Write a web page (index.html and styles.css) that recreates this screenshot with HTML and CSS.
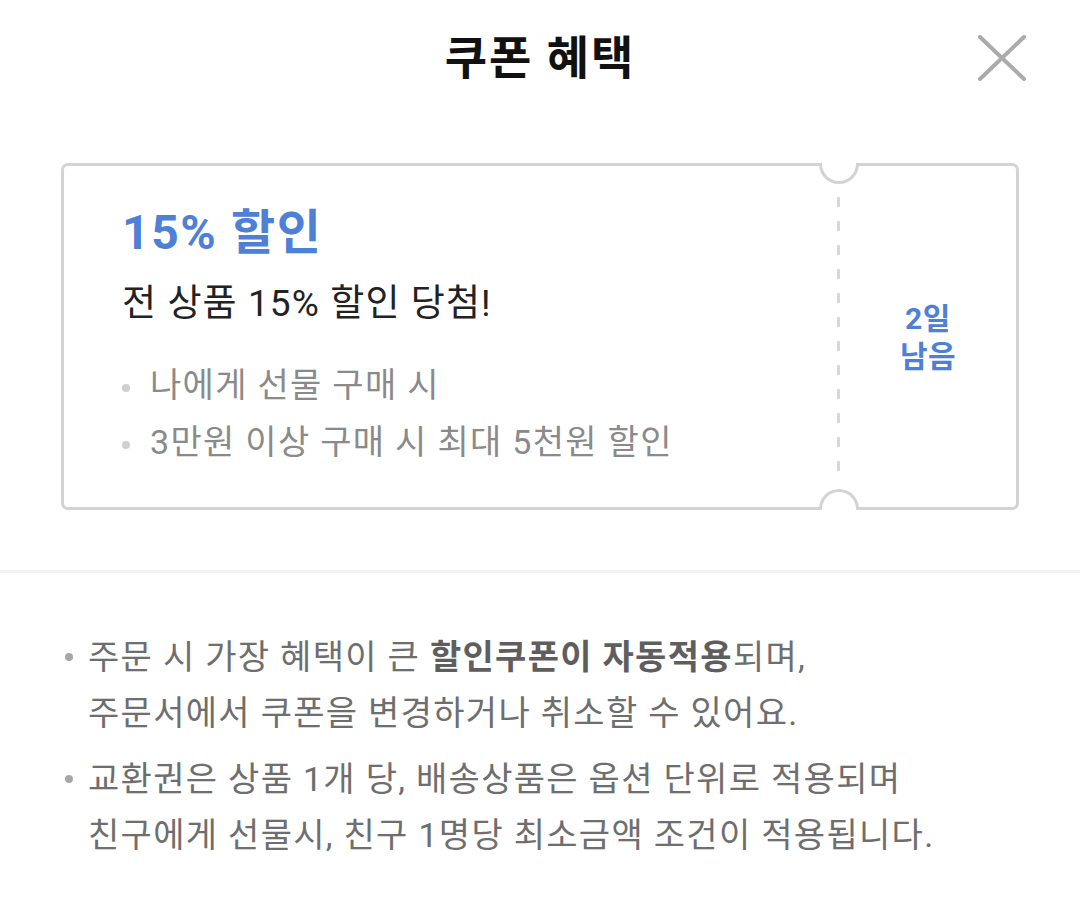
FILE: index.html
```html
<!DOCTYPE html>
<html lang="ko">
<head>
<meta charset="utf-8">
<link rel="stylesheet" href="styles.css">
</head>
<body>
<div class="sheet">
  <header class="header">
    <div></div>
    <h1 class="title">쿠폰 혜택</h1>
    <div class="close-wrap">
      <svg class="close" width="48" height="46" viewBox="0 0 48 46"><path d="M2 2 L46 44 M46 2 L2 44" stroke="#ababab" stroke-width="4" stroke-linecap="round" fill="none"/></svg>
    </div>
  </header>

  <section class="ticket-area">
    <div class="ticket">
      <div class="ticket-main">
        <div class="coupon-title">15% 할인</div>
        <div class="coupon-sub">전 상품 15% 할인 당첨!</div>
        <ul class="cond">
          <li>나에게 선물 구매 시</li>
          <li>3만원 이상 구매 시 최대 5천원 할인</li>
        </ul>
      </div>
      <div class="divider"></div>
      <div class="ticket-side">2일<br>남음</div>
    </div>
  </section>

  <div class="sep"></div>

  <ul class="notes">
    <li>주문 시 가장 혜택이 큰 <b>할인쿠폰이 자동적용</b>되며,<br>주문서에서 쿠폰을 변경하거나 취소할 수 있어요.</li>
    <li>교환권은 상품 1개 당, 배송상품은 옵션 단위로 적용되며<br>친구에게 선물시, 친구 1명당 최소금액 조건이 적용됩니다.</li>
  </ul>
</div>
</body>
</html>
```

FILE: styles.css
```css
html, body {
  margin: 0;
  padding: 0;
  background: #fff;
}
body {
  font-family: Roboto, "Noto Sans CJK KR", sans-serif;
  color: #222;
}
.sheet {
  width: 1080px;
}
.header {
  display: grid;
  grid-template-columns: 1fr auto 1fr;
  align-items: center;
  height: 115px;
}
.title {
  margin: 0;
  font-size: 46px;
  font-weight: 700;
  color: #111;
  line-height: 60px;
  letter-spacing: 2px;
}
.close-wrap {
  display: flex;
  justify-content: flex-end;
  padding-right: 54px;
}
.close {
  display: block;
}
.ticket-area {
  padding: 48px 61px 60px;
}
.ticket {
  position: relative;
  display: flex;
  height: 347px;
  box-sizing: border-box;
  border: 3px solid #d3d3d3;
  border-radius: 7px;
}
.ticket::before,
.ticket::after {
  content: "";
  position: absolute;
  left: 755px;
  width: 40px;
  height: 21px;
  box-sizing: border-box;
  border: 3px solid #d3d3d3;
  background: #fff;
}
.ticket::before {
  top: -3px;
  border-top: none;
  border-radius: 0 0 20px 20px;
}
.ticket::after {
  bottom: -3px;
  border-bottom: none;
  border-radius: 20px 20px 0 0;
}
.ticket-main {
  width: 773px;
  box-sizing: border-box;
  padding: 36px 0 0 58px;
}
.coupon-title {
  font-size: 48px;
  font-weight: 700;
  line-height: 62px;
  letter-spacing: 1.6px;
  color: #4f80d8;
}
.coupon-sub {
  margin-top: 15px;
  font-size: 37px;
  line-height: 50px;
  letter-spacing: 1.1px;
  color: #222;
}
.cond {
  list-style: none;
  margin: 28px 0 0;
  padding: 0;
}
.cond li {
  position: relative;
  padding-left: 28px;
  font-size: 34px;
  line-height: 57px;
  letter-spacing: 1.3px;
  color: #8a8a8a;
}
.cond li::before {
  content: "";
  position: absolute;
  left: 0;
  top: 27px;
  width: 8px;
  height: 8px;
  border-radius: 50%;
  background: #cfcfcf;
}
.divider {
  width: 3px;
  margin: 31px 0;
  background: repeating-linear-gradient(to bottom, #d8d8d8 0 10px, transparent 10px 24px);
}
.ticket-side {
  flex: 1;
  display: flex;
  align-items: center;
  justify-content: center;
  text-align: center;
  font-size: 30px;
  font-weight: 700;
  line-height: 38px;
  letter-spacing: 0.5px;
  color: #4f80d8;
  padding-top: 2px;
}
.sep {
  height: 3px;
  background: #f3f3f3;
}
.notes {
  list-style: none;
  margin: 0;
  padding: 56px 20px 0 88px;
}
.notes li {
  position: relative;
  font-size: 34px;
  line-height: 56px;
  letter-spacing: 1.3px;
  color: #6e6e6e;
  margin-bottom: 10px;
}
.notes li b {
  font-weight: 700;
  color: #5e5e5e;
}
.notes li::before {
  content: "";
  position: absolute;
  left: -23px;
  top: 24px;
  width: 8px;
  height: 8px;
  border-radius: 50%;
  background: #a8a8a8;
}
```
